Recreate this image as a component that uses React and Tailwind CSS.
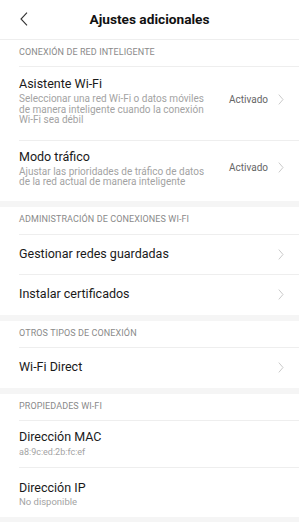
import React from "react";

const Chevron = () => (
  <svg width="6" height="11" viewBox="0 0 6 11" className="shrink-0">
    <path d="M0.8 0.6 L5 5.5 L0.8 10.4" fill="none" stroke="#c4c4c4" strokeWidth="0.9" />
  </svg>
);

const Band = () => <div className="h-[6px] bg-[#f5f5f5]" />;

const SectionHeader = ({ children, h = "h-[27px]" }) => (
  <div className={"ml-[19px] flex items-center border-b border-[#eeeeee] text-[9px] text-[#8a8a8a] tracking-[0.1px] " + h}>
    {children}
  </div>
);

const Title = ({ children, lh = "leading-[20px]" }) => (
  <div className={"text-[12.5px] text-[#1a1a1a] " + lh}>{children}</div>
);

export default function App() {
  return (
    <div className="w-[299px] h-[522px] overflow-hidden bg-white" style={{ fontFamily: "Roboto, 'Noto Sans', sans-serif" }}>
      <div className="relative h-[40px] flex items-center justify-center border-b border-[#eeeeee]">
        <svg width="8" height="14" viewBox="0 0 8 14" className="absolute left-[20px] top-[12px]">
          <path d="M7 0.6 L1 7 L7 13.4" fill="none" stroke="#333" strokeWidth="1.1" />
        </svg>
        <div className="text-[13.7px] font-bold text-[#111]">Ajustes adicionales</div>
      </div>

      <SectionHeader>CONEXIÓN DE RED INTELIGENTE</SectionHeader>
      <div className="ml-[19px] flex items-center pr-[15px] border-b border-[#eeeeee] pt-[7px] pb-[14px]">
        <div className="flex-1 min-w-0">
          <Title>Asistente Wi-Fi</Title>
          <div className="text-[10px] leading-[10.5px] text-[#a3a3a3] w-[195px]">Seleccionar una red Wi-Fi o datos móviles de manera inteligente cuando la conexión Wi-Fi sea débil</div>
        </div>
        <div className="text-[10px] text-[#666666] mr-[10px]">Activado</div>
        <Chevron />
      </div>
      <div className="ml-[19px] flex items-center pr-[15px] pt-[6px] pb-[13px]">
        <div className="flex-1 min-w-0">
          <Title>Modo tráfico</Title>
          <div className="text-[10px] leading-[10.5px] text-[#a3a3a3] w-[195px]">Ajustar las prioridades de tráfico de datos de la red actual de manera inteligente</div>
        </div>
        <div className="text-[10px] text-[#666666] mr-[10px]">Activado</div>
        <Chevron />
      </div>
      <Band />

      <SectionHeader h="h-[28px]">ADMINISTRACIÓN DE CONEXIONES WI-FI</SectionHeader>
      <div className="ml-[19px] h-[40px] flex items-center pr-[15px] border-b border-[#eeeeee]">
        <div className="flex-1 text-[12.5px] text-[#1a1a1a]">Gestionar redes guardadas</div>
        <Chevron />
      </div>
      <div className="ml-[19px] h-[40px] flex items-center pr-[15px]">
        <div className="flex-1 text-[12.5px] text-[#1a1a1a]">Instalar certificados</div>
        <Chevron />
      </div>
      <Band />

      <SectionHeader>OTROS TIPOS DE CONEXIÓN</SectionHeader>
      <div className="ml-[19px] h-[40px] flex items-center pr-[15px]">
        <div className="flex-1 text-[12.5px] text-[#1a1a1a]">Wi-Fi Direct</div>
        <Chevron />
      </div>
      <Band />

      <SectionHeader>PROPIEDADES WI-FI</SectionHeader>
      <div className="ml-[19px] border-b border-[#eeeeee] pt-[6px] pb-[10px]">
        <Title>Dirección MAC</Title>
        <div className="text-[9px] leading-[10px] text-[#a3a3a3]">a8:9c:ed:2b:fc:ef</div>
      </div>
      <div className="ml-[19px] pt-[11px] pb-[10px]">
        <Title lh="leading-[18px]">Dirección IP</Title>
        <div className="text-[9.5px] leading-[10px] text-[#a3a3a3]">No disponible</div>
      </div>
      <Band />
    </div>
  );
}
